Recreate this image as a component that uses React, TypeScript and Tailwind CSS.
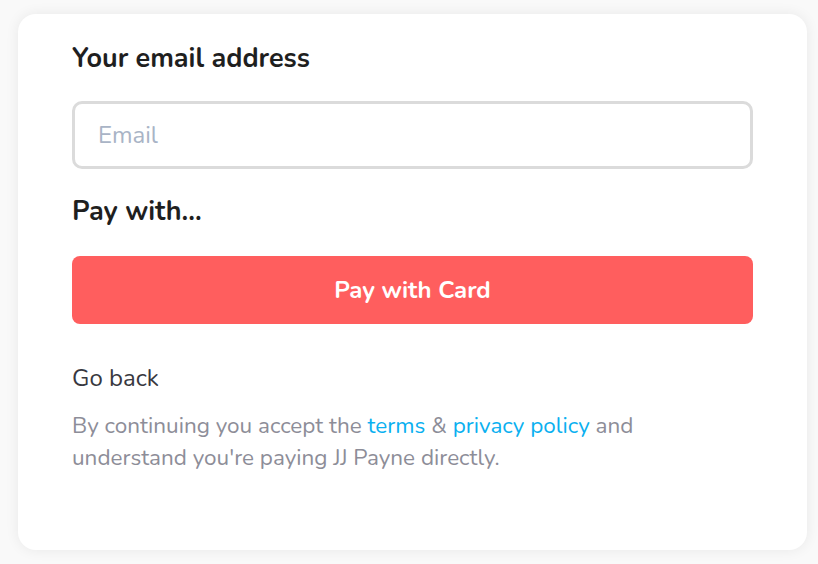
export default function App() {
  return (
    <div className="min-h-screen bg-[#f9f9f9] pt-[14px] pb-[14px] pl-[18px] pr-[11px] font-['Nunito','Noto_Sans',sans-serif]">
      <div className="rounded-[18px] bg-white px-[54px] pt-[27px] pb-[76px] shadow-[0_0_14px_rgba(0,0,0,0.07)]">
        <h2 className="text-[27px] font-bold leading-[36px] text-[#1f1f1f]">Your email address</h2>
        <input
          type="email"
          placeholder="Email"
          className="mt-[24px] block h-[68px] w-full rounded-[10px] border-[3px] border-[#dbdbdb] px-[23px] text-[24px] text-gray-800 outline-none placeholder:text-[#a9b4c6]"
        />
        <h2 className="mt-[25px] text-[27px] font-bold leading-[36px] text-[#1f1f1f]">Pay with...</h2>
        <button className="mt-[26px] flex h-[68px] w-full items-center justify-center rounded-[8px] bg-[#ff5e5e] text-[24px] font-bold text-white">
          Pay with Card
        </button>
        <button className="mt-[38px] block text-[24px] leading-[32px] text-[#383840]">Go back</button>
        <p className="mt-[16px] text-[22.5px] leading-[32px] text-[#8d8d98]">
          By continuing you accept the <a className="text-[#0ab0f0]">terms</a> &amp;{" "}
          <a className="text-[#0ab0f0]">privacy policy</a> and
          <br />
          understand you're paying JJ Payne directly.
        </p>
      </div>
    </div>
  );
}
